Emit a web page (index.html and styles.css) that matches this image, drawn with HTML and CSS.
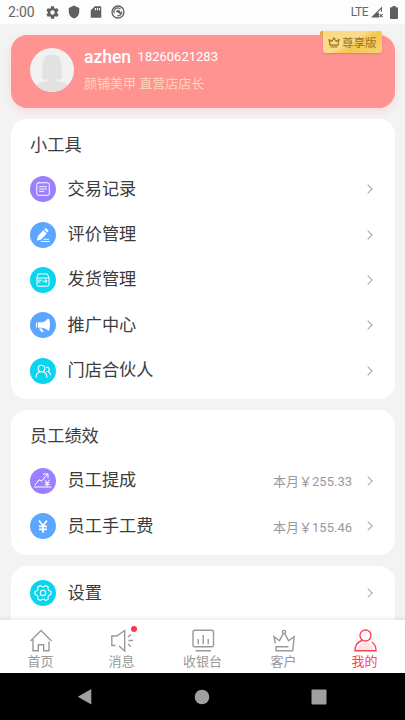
FILE: index.html
```
<!DOCTYPE html>
<html lang="zh-CN">
<head>
<meta charset="utf-8">
<title>我的</title>
<link rel="stylesheet" href="styles.css">
</head>
<body>
<div class="phone">
  <header class="status">
    <span class="clock">2:00</span>
    <svg class="st-icon" viewBox="0 0 24 24" width="15" height="15"><path fill="#5f5f5f" fill-rule="evenodd" d="M19.4 13a7.500 7.500 0 0 0 0-2l2.100-1.650a.5.5 0 0 0 .12-.64l-2-3.460a.5.5 0 0 0-.61-.22l-2.490 1a7.300 7.300 0 0 0-1.690-.98l-.38-2.650A.49.49 0 0 0 14 2h-4a.49.49 0 0 0-.49.42l-.38 2.650c-.61.25-1.170.58-1.690.98l-2.490-1a.49.49 0 0 0-.61.22l-2 3.460a.49.49 0 0 0 .12.64L4.600 11a7.900 7.900 0 0 0 0 2l-2.100 1.650a.49.49 0 0 0-.12.64l2 3.460c.12.22.39.3.61.22l2.490-1c.52.4 1.080.73 1.690.98l.38 2.650c.03.24.24.4.49.4h4c.25 0 .46-.18.49-.42l.38-2.650a7.300 7.300 0 0 0 1.690-.98l2.490 1c.23.09.49 0 .61-.22l2-3.460a.49.49 0 0 0-.12-.64zM12 15.500a3.500 3.500 0 1 1 0-7 3.500 3.500 0 0 1 0 7z"/></svg>
    <svg class="st-icon" viewBox="0 0 24 24" width="14" height="14"><path fill="#5f5f5f" d="M12 1 3 5v6c0 5.550 3.840 10.700 9 12 5.160-1.300 9-6.450 9-12V5z"/></svg>
    <svg class="st-icon" viewBox="0 0 24 24" width="14" height="14"><path fill="#5f5f5f" fill-rule="evenodd" d="M20 2H10L3 9v13h18V3zM10 5h2v4h-2zM13.500 5h2v4h-2zM17 5h2v4h-2z"/></svg>
    <svg class="st-icon" viewBox="0 0 14 14" width="14" height="14"><circle cx="7" cy="7" r="6" fill="none" stroke="#5f5f5f" stroke-width="1.300"/><path d="M3.400 8.300A3.700 3.700 0 0 1 9.500 4.200M10.700 6.300a3.700 3.700 0 0 1-4.400 4.400" fill="none" stroke="#5f5f5f" stroke-width="1.200"/><path d="M4.800 6.600c.8-2 3.200-2.300 4.300-.6l1.400 3.500-2.800-1.300-1.200-1z" fill="#5f5f5f"/></svg>
    <span class="lte">LTE</span>
    <svg class="signal" viewBox="0 0 12 12" width="12" height="12"><path d="M0 11.500 11 .5v5H8v6z" fill="#5f5f5f"/><path d="M6.500 6.500 9.800 3.200v2.500H7.500v2z" fill="#fff"/><path d="m8.600 8.200 3 3m0-3-3 3" stroke="#5f5f5f" stroke-width="1.100"/></svg>
    <svg class="battery" viewBox="0 0 8 13" width="8" height="13"><path d="M2.500 0h3v1.300H7a1 1 0 0 1 1 1V12a1 1 0 0 1-1 1H1a1 1 0 0 1-1-1V2.300a1 1 0 0 1 1-1h1.500z" fill="#5f5f5f"/></svg>
  </header>

  <main class="content">
    <section class="profile">
      <svg class="avatar" viewBox="0 0 44 44" width="44" height="44"><defs><clipPath id="face"><circle cx="22" cy="22" r="22"/></clipPath></defs><circle cx="22" cy="22" r="22" fill="#f1f1f1"/><g clip-path="url(#face)" fill="#e2e2e2"><path d="M22 6.500c-7 0-9 5-9.500 11L12 30c2 2 4.500 2 6.500 1.500l7 0c2 .5 4.500.5 6.500-1.500l-.5-12.500c-.5-6-2.500-11-9.500-11z"/><path d="M18 27h8v5c1 2 10 2 12 6v7H6v-7c2-4 11-4 12-6z"/></g></svg>
      <div class="who">
        <div class="name-line"><b class="name">azhen</b><span class="tel">18260621283</span></div>
        <div class="role">颜铺美甲 直营店店长</div>
      </div>
      <div class="badge">
        <svg viewBox="0 0 12 12" width="12" height="12" fill="none" stroke="#987426" stroke-width="1.200" stroke-linejoin="round"><path d="M2 9.200 1 3.500l2.700 2L6 1.800l2.300 3.700 2.700-2-1 5.700zM2.500 11h7"/></svg>
        <span>尊享版</span>
      </div>
    </section>

    <section class="card">
      <h2>小工具</h2>
      <div class="row">
        <svg class="ico" viewBox="0 0 26 26"><circle cx="13" cy="13" r="13" fill="#9c7fff"/><g fill="none" stroke="#fff" stroke-linecap="round"><rect x="6.800" y="6.800" width="12.500" height="12.500" rx="1.500" stroke-width="1"/><path d="M9.500 10.700h7M9.500 13h7M9.500 15.300h4.500" stroke-width=".9"/></g></svg>
        <span class="label">交易记录</span><svg class="chev" viewBox="0 0 6 10"><path d="m.7.700 4.500 4.300-4.500 4.300"/></svg>
      </div>
      <div class="row">
        <svg class="ico" viewBox="0 0 26 26"><circle cx="13" cy="13" r="13" fill="#5da6ff"/><path d="m6.800 18.800 1-4.600 5.500-5.900 3.400 3.200-5.600 5.900zM14.100 7.500l1-1a1 1 0 0 1 1.400 0l1.700 1.600a1 1 0 0 1 0 1.400l-.9 1z" fill="#fff"/><path d="M14 17.300h4.500M11 19.500h8.500" stroke="#fff" stroke-width=".9" stroke-linecap="round"/></svg>
        <span class="label">评价管理</span><svg class="chev" viewBox="0 0 6 10"><path d="m.7.700 4.500 4.300-4.500 4.300"/></svg>
      </div>
      <div class="row">
        <svg class="ico" viewBox="0 0 26 26"><circle cx="13" cy="13" r="13" fill="#0ad5ef"/><g fill="none" stroke="#fff" stroke-width="1" stroke-linecap="round" stroke-linejoin="round"><path d="M7 11v7a1.200 1.200 0 0 0 1.200 1.200h9.600A1.200 1.200 0 0 0 19 18v-7L17.500 7h-9zh12M8.500 13.200h3M8.500 15.200h1.500M13 14.200h4M15.300 12.600l1.700 1.600-1.700 1.600"/></g></svg>
        <span class="label">发货管理</span><svg class="chev" viewBox="0 0 6 10"><path d="m.7.700 4.500 4.300-4.500 4.300"/></svg>
      </div>
      <div class="row">
        <svg class="ico" viewBox="0 0 26 26"><circle cx="13" cy="13" r="13" fill="#5da6ff"/><path d="M6 10.500h1.200v5H6zM8 10.300h3.500c2.500-.3 4.500-1.500 6-3.300q1.200-.7 1.700 0c1 3.500 1 8 0 11.200q-.5.700-1.500 0c-1.700-1.500-3.700-2.500-6.200-2.500H8zM9 16.500h3.200l.2 2 1.300.5v1h-2.200z" fill="#fff"/></svg>
        <span class="label">推广中心</span><svg class="chev" viewBox="0 0 6 10"><path d="m.7.700 4.500 4.300-4.500 4.300"/></svg>
      </div>
      <div class="row">
        <svg class="ico" viewBox="0 0 26 26"><circle cx="13" cy="13" r="13" fill="#0ad5ef"/><g fill="none" stroke="#fff" stroke-width="1.100" stroke-linecap="round"><circle cx="11.500" cy="10.500" r="3.300"/><path d="M6 19.200c.2-3.500 2.500-5.400 5.500-5.400s5.200 1.900 5.400 5.400M16.500 9.300c3-.5 3.700 3.200 1.200 4.200 1.600.3 2.500 1.600 2.700 3.300"/></g></svg>
        <span class="label">门店合伙人</span><svg class="chev" viewBox="0 0 6 10"><path d="m.7.700 4.500 4.300-4.500 4.300"/></svg>
      </div>
    </section>

    <section class="card">
      <h2>员工绩效</h2>
      <div class="row">
        <svg class="ico" viewBox="0 0 26 26"><circle cx="13" cy="13" r="13" fill="#9c7fff"/><g fill="none" stroke="#fff" stroke-width="1" stroke-linecap="round" stroke-linejoin="round"><path d="m5 17 4-5.200 2.500 1.400 6-7.200M13.300 6H18v4M4.500 19h16.500"/><path d="m15 12 2.200 2.700 2.200-2.700M17.200 14.700V18M15.200 14.800h4M15.200 16.600h4"/></g></svg>
        <span class="label">员工提成</span><span class="amount">本月￥255.33</span><svg class="chev" viewBox="0 0 6 10"><path d="m.7.700 4.500 4.300-4.500 4.300"/></svg>
      </div>
      <div class="row">
        <svg class="ico" viewBox="0 0 26 26"><circle cx="13" cy="13" r="13" fill="#5da6ff"/><path d="m9 7.500 4 5.200 4-5.200M13 12.700v7M9 13.300h8M9 16.300h8" fill="none" stroke="#fff" stroke-width="1.700"/></svg>
        <span class="label">员工手工费</span><span class="amount">本月￥155.46</span><svg class="chev" viewBox="0 0 6 10"><path d="m.7.700 4.500 4.300-4.500 4.300"/></svg>
      </div>
    </section>

    <section class="card card-last">
      <div class="row">
        <svg class="ico" viewBox="0 0 26 26"><circle cx="13" cy="13" r="13" fill="#0ad5ef"/><g fill="none" stroke="#fff" stroke-width="1.100" stroke-linejoin="round"><circle cx="13" cy="13" r="2.700"/><path d="M10.300 5.400Q13 8.300 15.700 5.400L18.300 6.900Q17.100 10.800 21 11.500V14.500Q17.100 15.200 18.300 19.100L15.700 20.600Q13 17.700 10.300 20.600L7.700 19.100Q8.900 15.200 5 14.500V11.500Q8.900 10.800 7.700 6.900Z"/></g></svg>
        <span class="label">设置</span><svg class="chev" viewBox="0 0 6 10"><path d="m.7.700 4.500 4.300-4.500 4.300"/></svg>
      </div>
    </section>
  </main>

  <nav class="tabs">
    <div class="tab"><svg viewBox="0 0 24 24"><path d="M1.500 12 12 1.500 22.500 12M4 10.500v11.300h5.300v-6h5.400v6H20v-9.300"/></svg><span>首页</span></div>
    <div class="tab"><svg viewBox="0 0 24 24"><path d="M5.500 16.500H1.800V7h5L14.700 1.500V22L9 17M18 8l3-2.500M18.500 11.500H23M18 15l3 2.500"/></svg><i class="dot"></i><span>消息</span></div>
    <div class="tab"><svg viewBox="0 0 24 24"><rect x="2" y="1.200" width="20.500" height="16.500" rx="1.500"/><path d="M7.200 10v5.300M12.200 6v9.300M17.200 10v5.300M4.500 21.800h15.500"/></svg><span>收银台</span></div>
    <div class="tab"><svg viewBox="0 0 24 24"><circle cx="12" cy="3" r="1.600"/><path d="M3.300 14.500 2 7.700l5.500 4 3.700-7M12.800 4.700l3.700 7 5.700-4-1.500 14H4v-4h12.500"/></svg><span>客户</span></div>
    <div class="tab active"><svg viewBox="0 0 24 24"><path class="tint" d="M4 21c1-5 5-7.500 8.500-7.500S19 16 20 21z"/><circle cx="12.500" cy="6.500" r="5.500"/><path d="M9 11.500C4.500 13 2 17 2 21.700h21c0-3.600-1.200-6.800-4.200-8.700"/></svg><span>我的</span></div>
  </nav>

  <footer class="sysnav">
    <svg viewBox="0 0 16 18" width="16" height="18"><path d="M14.300 1v15.500L.8 8.800z" fill="#a0a0a0"/></svg>
    <svg viewBox="0 0 16 16" width="16" height="16"><circle cx="8" cy="8" r="7.300" fill="#a0a0a0"/></svg>
    <svg viewBox="0 0 16 16" width="16" height="16"><rect x=".5" y=".5" width="15" height="15" rx="1" fill="#a0a0a0"/></svg>
  </footer>
</div>
</body>
</html>
```
FILE: styles.css
```
* { box-sizing: border-box; }
body {
  margin: 0;
  font-family: Roboto, "Noto Sans CJK SC", sans-serif;
  color: #3c3c3c;
}
.phone {
  width: 405px;
  height: 720px;
  display: flex;
  flex-direction: column;
  overflow: hidden;
  background: #f3f3f3;
}
.status {
  flex: none;
  height: 24px;
  padding: 0 7px 0 8px;
  display: flex;
  align-items: center;
  background: #fdfdfd;
  color: #666;
}
.clock { width: 37px; font-size: 14px; letter-spacing: -0.1px; }
.st-icon { margin-right: 8px; }
.st-icon:nth-of-type(1) { margin-right: 7px; }
.lte { margin-left: auto; font-size: 12px; letter-spacing: -0.5px; }
.signal { margin: 0 7px 0 3px; }

.content {
  flex: 1;
  min-height: 0;
  overflow: hidden;
  padding: 10.500px 10px 0 11px;
  display: flex;
  flex-direction: column;
  gap: 11px;
}
.profile {
  flex: none;
  position: relative;
  height: 73.500px;
  border-radius: 16px;
  background: #ff9391;
  box-shadow: 0 4px 10px rgba(255, 130, 130, .2);
  padding: 13.500px 19px 0;
  display: flex;
}
.who { margin-left: 10px; color: #fff; }
.name-line { display: flex; align-items: center; height: 17px; }
.name { font-size: 17.500px; font-weight: 500; }
.tel { font-size: 13px; margin-left: 6.500px; }
.role { margin-top: 9px; font-size: 13px; line-height: 20px; color: #ffd5b8; }
.badge {
  position: absolute;
  right: 13px;
  top: -3.500px;
  width: 59px;
  height: 21.500px;
  display: flex;
  align-items: center;
  padding-left: 5px;
  gap: 2px;
  border-radius: 1px 2px 3px 3px;
  background: linear-gradient(150deg, #fbd784 0%, #fbdc8b 45%, #f5c751 60%, #f9d271 100%);
  box-shadow: 0 1px 2px rgba(150, 80, 20, .3);
  color: #987426;
  font-size: 11.500px;
}
.badge::before {
  content: "";
  position: absolute;
  left: -3px;
  top: 0;
  width: 3px;
  height: 4px;
  border-radius: 2px 0 0 0;
  background: #dfa640;
}

.card {
  flex: none;
  background: #fff;
  border-radius: 16px;
  padding: 4px 22px 6px 19px;
}
.card h2 { margin: 0; height: 43.500px; line-height: 45px; font-size: 17.200px; font-weight: 400; }
.row { height: 45.400px; display: flex; align-items: center; }
.ico { width: 26px; height: 26px; flex: none; }
.label { margin-left: 11.500px; font-size: 17.200px; line-height: 25px; }
.amount { margin-left: auto; font-size: 13px; color: #999; }
.chev { width: 6px; height: 10px; margin-left: auto; fill: none; stroke: #aaa; stroke-width: 1.100; }
.amount + .chev { margin-left: 15px; }
.card-last { height: 120px; padding-top: 5px; }

.tabs {
  flex: none;
  height: 53px;
  position: relative;
  display: grid;
  grid-template-columns: repeat(5, 1fr);
  background: #fff;
  box-shadow: 0 -1px 4px rgba(0, 0, 0, .1);
}
.tab {
  position: relative;
  display: flex;
  flex-direction: column;
  align-items: center;
  padding-top: 9px;
  font-size: 13px;
  line-height: 18px;
  color: #999;
}
.tab svg { width: 24px; height: 24px; fill: none; stroke: currentColor; stroke-width: 1.400; }
.tab .tint { fill: #ffe0e3; stroke: none; }
.active { color: #fb4456; }
.dot {
  position: absolute;
  left: 50px;
  top: 6px;
  width: 6px;
  height: 6px;
  border-radius: 50%;
  background: #ff344b;
}
.sysnav {
  flex: none;
  height: 47px;
  background: #000;
  display: flex;
  align-items: center;
  justify-content: space-between;
  padding: 0 78px 0 77px;
}
```
